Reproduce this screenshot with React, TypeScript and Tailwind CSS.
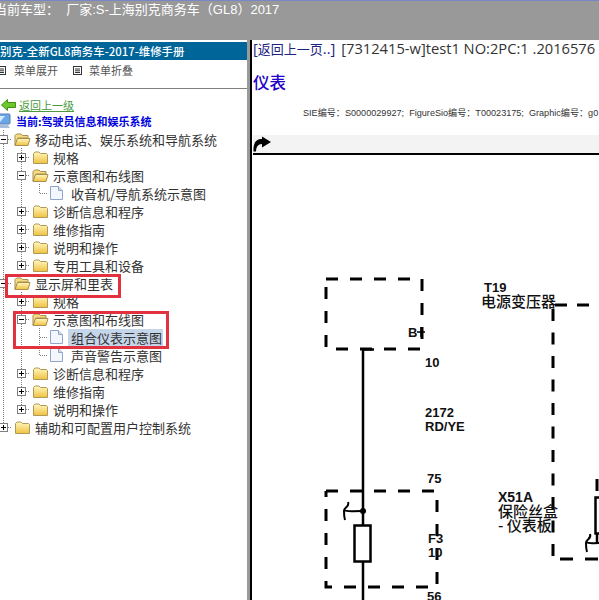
const SANS = 'font-["Liberation_Sans","Noto_Sans_CJK_SC",sans-serif]';

type Glyph = 'line' | 'plus' | 'plusEnd' | 'minus' | 'tee' | 'end';

interface TreeRow {
  cells: Glyph[];
  icon: 'closed' | 'open' | 'doc';
  label: string;
  selected?: boolean;
}

const rows: TreeRow[] = [
  { cells: ['minus'], icon: 'open', label: '移动电话、娱乐系统和导航系统' },
  { cells: ['line', 'plus'], icon: 'closed', label: '规格' },
  { cells: ['line', 'minus'], icon: 'open', label: '示意图和布线图' },
  { cells: ['line', 'line', 'end'], icon: 'doc', label: '收音机/导航系统示意图' },
  { cells: ['line', 'plus'], icon: 'closed', label: '诊断信息和程序' },
  { cells: ['line', 'plus'], icon: 'closed', label: '维修指南' },
  { cells: ['line', 'plus'], icon: 'closed', label: '说明和操作' },
  { cells: ['line', 'plusEnd'], icon: 'closed', label: '专用工具和设备' },
  { cells: ['minus'], icon: 'open', label: '显示屏和里表' },
  { cells: ['line', 'plus'], icon: 'closed', label: '规格' },
  { cells: ['line', 'minus'], icon: 'open', label: '示意图和布线图' },
  { cells: ['line', 'line', 'tee'], icon: 'doc', label: '组合仪表示意图', selected: true },
  { cells: ['line', 'line', 'end'], icon: 'doc', label: '声音警告示意图' },
  { cells: ['line', 'plus'], icon: 'closed', label: '诊断信息和程序' },
  { cells: ['line', 'plus'], icon: 'closed', label: '维修指南' },
  { cells: ['line', 'plusEnd'], icon: 'closed', label: '说明和操作' },
  { cells: ['plusEnd'], icon: 'closed', label: '辅助和可配置用户控制系统' },
];

function TreeGlyph({ kind }: { kind: Glyph }) {
  const hasBox = kind === 'plus' || kind === 'plusEnd' || kind === 'minus';
  const goesDown = kind !== 'plusEnd' && kind !== 'end';
  return (
    <svg width="18" height="18" viewBox="0 0 18 18" className="shrink-0">
      <g stroke="#808080" strokeWidth="1" strokeDasharray="1 1" fill="none">
        <path d={`M9.5 0V${goesDown ? 18 : 9}`} />
        {kind !== 'line' && <path d="M10 9.5H18" />}
      </g>
      {hasBox && (
        <g>
          <rect x="5.5" y="5.5" width="8" height="8" fill="#fff" stroke="#7f7f7f" />
          <path d="M7 9.5H12" stroke="#000" />
          {kind !== 'minus' && <path d="M9.5 7V12" stroke="#000" />}
        </g>
      )}
    </svg>
  );
}

function FolderIcon({ open }: { open: boolean }) {
  return (
    <svg width="17" height="15" viewBox="0 0 17 15" className="shrink-0 ml-[2px]">
      <defs>
        <linearGradient id="folderFill" x1="0" y1="0" x2="0" y2="1">
          <stop offset="0" stopColor="#fff8c0" />
          <stop offset="1" stopColor="#f0c040" />
        </linearGradient>
      </defs>
      {open ? (
        <>
          <path d="M1 13V3.5L2.5 2H7L8.5 3.5H14V6H4Z" fill="#f6dc80" stroke="#a88f50" />
          <path d="M1 13.5L3.5 6.5H16L14 13.5Z" fill="url(#folderFill)" stroke="#a88f50" />
        </>
      ) : (
        <path d="M1.5 13.5V3.5L3 2H7L8.5 3.5H14.5L15.5 4.5V13.5Z" fill="url(#folderFill)" stroke="#b09a58" />
      )}
    </svg>
  );
}

function DocIcon() {
  return (
    <svg width="17" height="16" viewBox="0 0 17 16" className="shrink-0 ml-[2px]">
      <path d="M0.5 1.5H8.5L12.5 5.5V14.5H0.5Z" fill="#f3f7fd" stroke="#8ea6cc" />
      <path d="M8.5 1.5V5.5H12.5" fill="#cfdcf0" stroke="#8ea6cc" />
    </svg>
  );
}

function ListIcon() {
  return (
    <svg width="9" height="9" viewBox="0 0 9 9" className="shrink-0">
      <rect x="0.5" y="0.5" width="8" height="8" fill="#fff" stroke="#333" />
      <path d="M2 3H7M2 4.8H7M2 6.5H7" stroke="#333" />
    </svg>
  );
}

function Tree() {
  return (
    <div className="-ml-[6px] mt-px">
      {rows.map((row, i) => (
        <div key={i} className="flex items-center h-[18px]">
          {row.cells.map((c, j) => (
            <TreeGlyph key={j} kind={c} />
          ))}
          {row.icon === 'doc' ? <DocIcon /> : <FolderIcon open={row.icon === 'open'} />}
          <span
            className={`ml-[1px] pl-[3px] pr-[1px] h-[17px] leading-[17px] text-[13px] text-[#333] whitespace-nowrap ${row.selected ? 'bg-[#c6d6ea]' : ''}`}
          >
            {row.label}
          </span>
        </div>
      ))}
    </div>
  );
}

function LeftPanel() {
  return (
    <aside className="relative w-[247px] shrink-0 bg-white overflow-hidden">
      <div className="mt-[2px] h-[18px] bg-[#006699] text-white text-[11.4px] leading-[18px] font-medium whitespace-nowrap">
        别克-全新GL8商务车-2017-维修手册
      </div>
      <div className="h-[29px] border-b border-[#808080] flex items-start pt-[4px] -ml-[3px] text-[11px] leading-[12px] text-[#555]">
        <div className="flex items-center h-[12px]">
          <ListIcon />
          <span className="ml-[8px]">菜单展开</span>
          <span className="ml-[15px]">
            <ListIcon />
          </span>
          <span className="ml-[7px]">菜单折叠</span>
        </div>
      </div>
      <div className="mt-[9px] h-[14px] flex items-center pl-[1px]">
        <svg width="15" height="12" viewBox="0 0 15 12" className="shrink-0">
          <path d="M0.5 6L6.5 0.5V3.5H14.5V8.5H6.5V11.5Z" fill="#6dc62a" stroke="#3f8f12" />
        </svg>
        <a className="ml-[3px] text-[11px] leading-[14px] text-[#4a9a3c] underline">返回上一级</a>
      </div>
      <div className="h-[17px] flex items-center -ml-[4px]">
        <svg width="15" height="16" viewBox="0 0 15 16" className="shrink-0">
          <rect x="1" y="1" width="13" height="10" rx="1" fill="#6aa6e8" stroke="#5a7fae" />
          <path d="M3 3H9L4 9H3Z" fill="#d6ecff" />
          <path d="M4 12H12L14 15H2Z" fill="#a8bfdc" />
        </svg>
        <span className="ml-[5px] text-[11px] leading-[14px] font-bold text-[#0000dd] whitespace-nowrap">
          当前:驾驶员信息和娱乐系统
        </span>
      </div>
      <Tree />
      <div className="absolute left-[5px] top-[234px] w-[116px] h-[24px] border-[3px] border-[#e2313f]" />
      <div className="absolute left-[13px] top-[271px] w-[156px] h-[38px] border-[3px] border-[#e2313f]" />
    </aside>
  );
}

function Dashed({ d }: { d: string }) {
  return <path d={d} fill="none" stroke="#000" strokeWidth="3" strokeDasharray="12 12" />;
}

// connector hook beside a fuse: an s-curve with a short arm to the wire
function Hook({ x, y, arm }: { x: number; y: number; arm: number }) {
  return (
    <path
      d={`M${x + 4} ${y - 9} C${x + 6} ${y - 4} ${x} ${y - 4} ${x} ${y} C${x} ${y + 3} ${x} ${y + 6} ${x + 1} ${y + 9} M${x} ${y - 1} C${x + 3} ${y + 1} ${x + 6} ${y} ${x + arm} ${y}`}
      fill="none"
      stroke="#000"
      strokeWidth="2"
    />
  );
}

function Diagram() {
  const label = { fontFamily: '"Liberation Sans",sans-serif', fontWeight: 700, fontSize: 13, fill: '#111' };
  const cjk = { fontFamily: '"Noto Sans CJK SC",sans-serif', fontWeight: 500, fontSize: 15, fill: '#111' };
  return (
    <svg width="346" height="446" viewBox="253 154 346 446" className="block">
      <Dashed d="M326 279H422V349H326V279" />
      <path d="M363 600V349.5H374" fill="none" stroke="#000" strokeWidth="2.5" />
      <path d="M417 332H425M421 327V337" stroke="#000" strokeWidth="1.5" />
      <text x="408" y="337" {...label}>B</text>
      <text x="425" y="367" {...label}>10</text>
      <text x="425" y="417" {...label}>2172</text>
      <text x="425" y="431" {...label}>RD/YE</text>
      <text x="484" y="292" {...label}>T19</text>
      <text x="481" y="307" {...cjk}>电源变压器</text>
      <path d="M555 305H599" fill="none" stroke="#000" strokeWidth="3" strokeDasharray="12 10" />
      <path d="M553 309V557" fill="none" stroke="#000" strokeWidth="3" strokeDasharray="12 11.5" />
      <path d="M560 559H599" fill="none" stroke="#000" strokeWidth="3" strokeDasharray="13 12" />
      <text x="427" y="483" {...label}>75</text>
      <Dashed d="M326 491H437V587H326V491" />
      <circle cx="363" cy="511" r="3" fill="#000" />
      <Hook x={344} y={511} arm={18} />
      <rect x="354.5" y="525.5" width="16" height="36" fill="#fff" stroke="#000" strokeWidth="2.5" />
      <text x="428" y="543" {...label}>F3</text>
      <text x="428" y="557" {...label}>10</text>
      <text x="427" y="601" {...label}>56</text>
      <text x="498" y="502" {...label} fontSize="14">X51A</text>
      <text x="498" y="517" {...cjk}>保险丝盒</text>
      <text x="498" y="531" {...cjk}>- 仪表板</text>
      <path d="M597 479V491" stroke="#000" strokeWidth="3" />
      <rect x="595.5" y="497.5" width="16" height="36" fill="#fff" stroke="#000" strokeWidth="2.5" />
      <path d="M597 533V544" stroke="#000" strokeWidth="2.5" />
      <Hook x={586} y={543} arm={13} />
    </svg>
  );
}

function RightPanel() {
  return (
    <main className="flex-1 min-w-0 bg-white overflow-hidden pl-[1px]">
      <div className='h-[16px] text-[14.7px] leading-[16px] whitespace-nowrap text-[#333] font-["Open_Sans","Noto_Sans_CJK_SC",sans-serif]'>
        <a className="text-[#1a237e] mr-[2px]">
          [<span className="text-[13px]">返回上一页</span>..]
        </a>{' '}
        [7312415-w]test1 NO:2PC:1 .2016576
      </div>
      <h1 className="mt-[15px] h-[22px] text-[16.5px] leading-[22px] font-medium text-[#2200cc]">仪表</h1>
      <p className={`mt-[13px] pl-[50px] h-[14px] text-[9.1px] leading-[14px] text-[#333] whitespace-nowrap ${SANS}`}>
        SIE编号：S0000029927;&nbsp; FigureSio编号：T00023175;&nbsp; Graphic编号：g0
      </p>
      <div className="mt-[15px] h-[18px] bg-[#f3f3f3] border-b-[2px] border-black box-content -mb-[1px] flex items-center">
        <svg width="18" height="16" viewBox="0 0 18 16" className="shrink-0">
          <path d="M9 0.5L18 6L9 11.5V8C5 8 3 11 3 15.5H0.5C0 7 3 3 9 3Z" fill="#000" />
        </svg>
      </div>
      <Diagram />
    </main>
  );
}

export default function App() {
  return (
    <div className='w-[599px] h-[600px] overflow-hidden flex flex-col bg-white font-["Noto_Sans_CJK_SC","Liberation_Sans",sans-serif]'>
      <header className="h-[40px] shrink-0 bg-[#999999] border-t border-[#7b86c4] overflow-hidden">
        <div className={`-ml-[6px] pt-px text-[13px] leading-[16px] text-white whitespace-nowrap ${SANS}`}>
          当前车型：&nbsp;&nbsp;厂家:S-上海别克商务车（GL8）2017
        </div>
      </header>
      <div className="flex flex-1 min-h-0">
        <LeftPanel />
        <div className="w-[3px] shrink-0 bg-[#9a9a9a]" />
        <div className="w-[2px] shrink-0 bg-black" />
        <RightPanel />
      </div>
    </div>
  );
}
